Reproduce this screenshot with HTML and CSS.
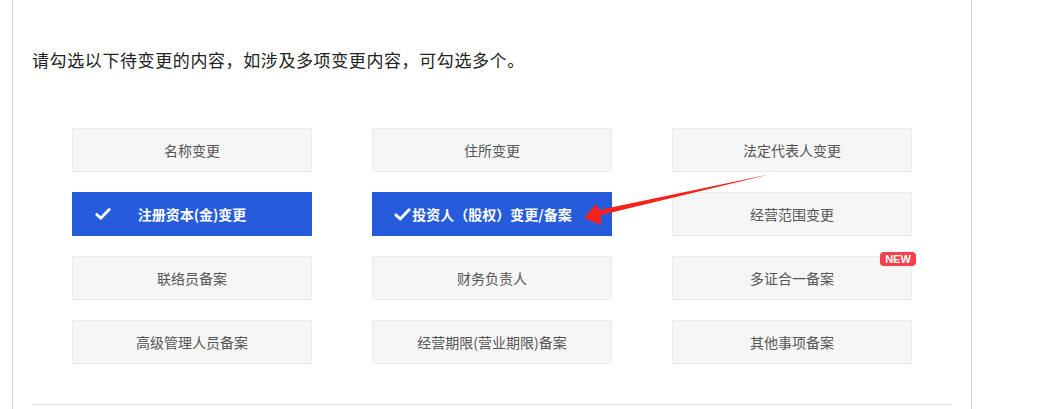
FILE: index.html
```html
<!DOCTYPE html>
<html lang="zh-CN">
<head>
<meta charset="utf-8">
<title>变更内容选择</title>
<link rel="stylesheet" href="styles.css">
</head>
<body>
<div class="panel">
  <p class="intro">请勾选以下待变更的内容，如涉及多项变更内容，可勾选多个。</p>
  <div class="options">
    <div class="opt">名称变更</div>
    <div class="opt">住所变更</div>
    <div class="opt">法定代表人变更</div>
    <div class="opt selected sel-left">
      <svg class="check" viewBox="0 0 16 14" width="16" height="14"><path d="M1.8 7.4 L5.8 11.2 L14.2 2.6" fill="none" stroke="#fff" stroke-width="2.8" stroke-linecap="round" stroke-linejoin="round"/></svg>
      <span>注册资本(金)变更</span>
    </div>
    <div class="opt selected sel-inline">
      <svg class="check-inline" viewBox="0 0 16 14" width="17" height="15"><path d="M1.8 7.4 L5.8 11.2 L14.2 2.6" fill="none" stroke="#fff" stroke-width="2.8" stroke-linecap="round" stroke-linejoin="round"/></svg>
      <span>投资人（股权）变更/备案</span>
    </div>
    <div class="opt">经营范围变更</div>
    <div class="opt">联络员备案</div>
    <div class="opt">财务负责人</div>
    <div class="opt">多证合一备案<span class="badge">NEW</span></div>
    <div class="opt">高级管理人员备案</div>
    <div class="opt">经营期限(营业期限)备案</div>
    <div class="opt">其他事项备案</div>
  </div>
  <div class="rule"></div>
</div>
<svg class="arrow" viewBox="0 0 1044 409" width="1044" height="409">
  <polygon points="584,218 596,204 599,210 771,174 601,215 601,225" fill="#f5211b"/>
</svg>
</body>
</html>
```

FILE: styles.css
```css
html, body {
  margin: 0;
  padding: 0;
  background: #fff;
}
body {
  font-family: "Microsoft YaHei", "Noto Sans CJK SC", "Noto Sans", sans-serif;
  width: 1044px;
  height: 409px;
  overflow: hidden;
  position: relative;
}
.panel {
  margin-left: 12px;
  width: 960px;
  height: 409px;
  box-sizing: border-box;
  border-left: 1px solid #d9d9d9;
  border-right: 1px solid #d4d4d4;
  padding: 48px 19px 0 19px;
}
.intro {
  margin: 0;
  font-size: 17px;
  letter-spacing: 0.6px;
  line-height: 24px;
  color: #222;
}
.options {
  margin: 56px 0 0 40px;
  display: grid;
  grid-template-columns: repeat(3, 240px);
  grid-auto-rows: 44px;
  column-gap: 60px;
  row-gap: 20px;
}
.opt {
  position: relative;
  box-sizing: border-box;
  background: #f6f6f6;
  border: 1px solid #ebebeb;
  display: flex;
  align-items: center;
  justify-content: center;
  font-size: 14px;
  color: #555;
}
.selected {
  background: #265bdb;
  border-color: #265bdb;
  color: #fff;
  font-weight: bold;
}
.sel-left {
  padding-left: 0;
}
.check {
  position: absolute;
  left: 22px;
  top: 14px;
}
.sel-inline {
  padding-right: 18px;
}
.check-inline {
  margin-right: 1px;
}
.badge {
  position: absolute;
  top: -5px;
  right: -5px;
  width: 36px;
  height: 14px;
  background: #f5414e;
  border-radius: 4px;
  color: #fff;
  font-family: "Liberation Sans", Arial, sans-serif;
  font-weight: bold;
  font-size: 11px;
  line-height: 14px;
  text-align: center;
}
.rule {
  margin-top: 40px;
  height: 1px;
  background: #dedede;
}
.arrow {
  position: absolute;
  left: 0;
  top: 0;
  pointer-events: none;
}
```
